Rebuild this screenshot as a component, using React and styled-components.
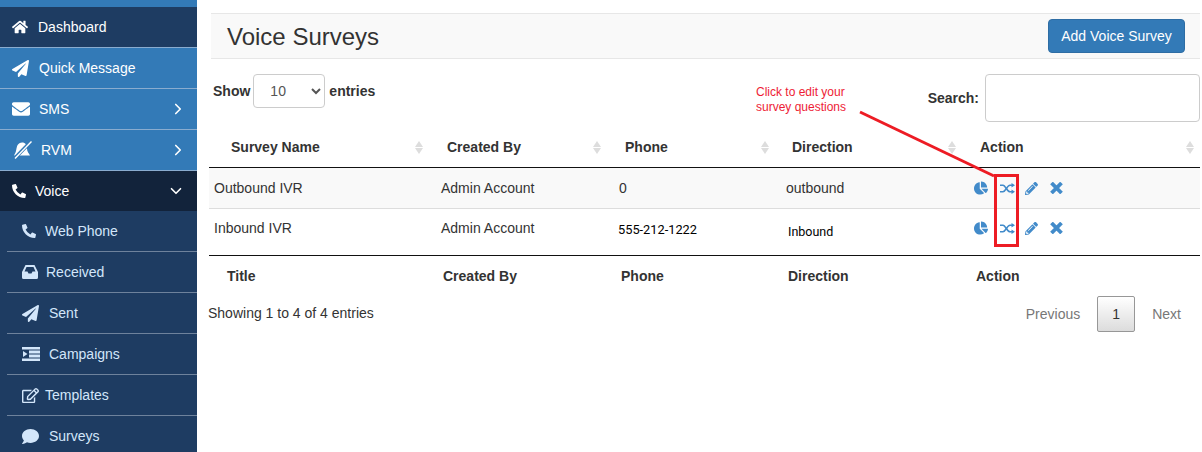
import React from 'react';
import styled, { createGlobalStyle } from 'styled-components';
import {
  FaHome, FaPaperPlane, FaEnvelope, FaPhoneAlt, FaRegEdit, FaComment, FaChartPie, FaPencilAlt,
} from 'react-icons/fa';
import { ChevronRight, ChevronDown } from 'lucide-react';

const GlobalStyle = createGlobalStyle`
  html, body {
    margin: 0;
    height: 452px;
    overflow: hidden;
    background: #fff;
    font-family: "Liberation Sans", Arial, sans-serif;
    font-size: 14px;
    color: #333;
  }
  * { box-sizing: border-box; }
`;

const BellOff = () => (
  <svg width="20" height="18" viewBox="0 0 20 18">
    <path d="M10 1.5c3.5 0 5 2.5 5 6 0 3.5 2 5 3 7H2l1.5-3C4.5 9.500 4.500 5 6 3.500 7 2.300 8.500 1.500 10 1.500Z" fill="currentColor" />
    <path d="M19 0.500 2.500 17.500" stroke="#337ab7" strokeWidth="3.600" />
    <path d="M19.500 0.500 3 17.500" stroke="currentColor" strokeWidth="1.400" />
  </svg>
);

const InboxIcon = () => (
  <svg width="16" height="14" viewBox="0 0 16 14">
    <path
      fillRule="evenodd"
      fill="currentColor"
      d="M3.500 0H12.500L16 7V12.500Q16 14 14.500 14H1.500Q0 14 0 12.500V7ZM4.500 2 2.500 6.500H5.500L6.500 8.500H9.500L10.500 6.500H13.500L11.500 2Z"
    />
  </svg>
);

const CampaignIcon = () => (
  <svg width="18" height="14" viewBox="0 0 18 14" fill="currentColor">
    <rect width="18" height="2.500" />
    <rect y="11.500" width="18" height="2.500" />
    <rect x="7" y="3.500" width="11" height="3" />
    <rect x="7" y="7.500" width="11" height="3" />
    <path d="M1 4 5.500 7 1 10Z" />
  </svg>
);

const ShuffleIcon = () => (
  <svg width="15" height="11" viewBox="0 0 15 11" fill="none" stroke="currentColor" strokeWidth="1.600">
    <path d="M0 2.200H3C5.500 2.200 7 8.800 10 8.800H12" />
    <path d="M0 8.800H3C5.500 8.800 7 2.200 10 2.200H12" />
    <path d="M11.500 0 15 2.200 11.500 4.400ZM11.500 6.600 15 8.800 11.500 11Z" fill="currentColor" stroke="none" />
  </svg>
);

const CrossIcon = () => (
  <svg width="13" height="12" viewBox="0 0 13 12" stroke="currentColor" strokeWidth="3.800">
    <path d="M1.500 1 11.500 11M11.500 1 1.500 11" />
  </svg>
);

// iconBox is the distance from the icon's left edge to the label
const mainNav = [
  { label: 'Dashboard', icon: <FaHome size={16} />, iconBox: 26, tone: 'dark' },
  { label: 'Quick Message', icon: <FaPaperPlane size={17} />, iconBox: 27, tone: 'blue' },
  { label: 'SMS', icon: <FaEnvelope size={18} />, iconBox: 27, tone: 'blue', caret: 'right' },
  { label: 'RVM', icon: <BellOff />, iconBox: 29, tone: 'blue', caret: 'right' },
  { label: 'Voice', icon: <FaPhoneAlt size={14} />, iconBox: 23, tone: 'active', caret: 'down' },
];

const subNav = [
  { label: 'Web Phone', icon: <FaPhoneAlt size={14} />, iconBox: 23 },
  { label: 'Received', icon: <InboxIcon />, iconBox: 24 },
  { label: 'Sent', icon: <FaPaperPlane size={17} />, iconBox: 27 },
  { label: 'Campaigns', icon: <CampaignIcon />, iconBox: 27 },
  { label: 'Templates', icon: <FaRegEdit size={17} />, iconBox: 23 },
  { label: 'Surveys', icon: <FaComment size={17} />, iconBox: 27 },
];

const columns = [
  { title: 'Survey Name', foot: 'Title', width: 227, first: true, sortGap: 13 },
  { title: 'Created By', foot: 'Created By', width: 178, sortGap: 13 },
  { title: 'Phone', foot: 'Phone', width: 167, sortGap: 12 },
  { title: 'Direction', foot: 'Direction', width: 188, sortGap: 13 },
  { title: 'Action', foot: 'Action', width: 231, sortGap: 6 },
];

const rows = [
  { name: 'Outbound IVR', by: 'Admin Account', phone: '0', direction: 'outbound' },
  { name: 'Inbound IVR', by: 'Admin Account', phone: '555-212-1222', direction: 'Inbound', pasted: true },
];

const toneColors = { dark: '#1e3c62', blue: '#337ab7', active: '#12233b' };

export default function App() {
  return (
    <>
      <GlobalStyle />
      <Page>
        <Sidebar>
          <TopStrip />
          {mainNav.map(({ label, icon, iconBox, tone, caret }) => (
            <NavRow key={label} $tone={tone}>
              <NavIcon $box={iconBox}>{icon}</NavIcon>
              {label}
              {caret === 'right' && <CaretRight><ChevronRight size={18} strokeWidth={2.2} /></CaretRight>}
              {caret === 'down' && <CaretDown><ChevronDown size={18} strokeWidth={2.2} /></CaretDown>}
            </NavRow>
          ))}
          {subNav.map(({ label, icon, iconBox }) => (
            <SubRow key={label}>
              <NavIcon $box={iconBox}>{icon}</NavIcon>
              {label}
            </SubRow>
          ))}
        </Sidebar>

        <Main>
          <PageHeader>
            <Title>Voice Surveys</Title>
            <AddButton>Add Voice Survey</AddButton>
          </PageHeader>

          <Toolbar>
            <Length>
              Show
              <Select defaultValue="10">
                <option>10</option>
                <option>25</option>
              </Select>
              entries
            </Length>
            <SearchLabel>
              Search:
              <SearchInput />
            </SearchLabel>
          </Toolbar>

          <Table>
            <colgroup>
              {columns.map((c) => <col key={c.title} style={{ width: c.width }} />)}
            </colgroup>
            <thead>
              <tr>
                {columns.map((c) => (
                  <HeadCell key={c.title} $first={c.first}>
                    <HeadInner $sortGap={c.sortGap}>
                      {c.title}
                      <SortArrows><i /><b /></SortArrows>
                    </HeadInner>
                  </HeadCell>
                ))}
              </tr>
            </thead>
            <tbody>
              {rows.map((r, i) => (
                <BodyRow key={r.name} $odd={i === 0}>
                  <Cell>{r.name}</Cell>
                  <Cell>{r.by}</Cell>
                  <Cell>{r.pasted ? <PhoneText>{r.phone}</PhoneText> : r.phone}</Cell>
                  <Cell>{r.pasted ? <DirectionText>{r.direction}</DirectionText> : r.direction}</Cell>
                  <Cell>
                    <Actions>
                      <FaChartPie size={14} />
                      <ShuffleIcon />
                      <FaPencilAlt size={13} />
                      <CrossIcon />
                    </Actions>
                  </Cell>
                </BodyRow>
              ))}
            </tbody>
            <tfoot>
              <tr>
                {columns.map((c) => (
                  <FootCell key={c.foot} $first={c.first}>{c.foot}</FootCell>
                ))}
              </tr>
            </tfoot>
          </Table>

          <Footer>
            <FooterInfo>Showing 1 to 4 of 4 entries</FooterInfo>
            <Pager>
              <PageLink>Previous</PageLink>
              <PageCurrent>1</PageCurrent>
              <PageLink>Next</PageLink>
            </Pager>
          </Footer>
        </Main>

        <Hint>Click to edit your<br />survey questions</Hint>
        <Pointer viewBox="0 0 140 68" width="140" height="68">
          <line x1="3" y1="2" x2="137" y2="66" stroke="#ed1c24" strokeWidth="3" />
        </Pointer>
        <Highlight />
      </Page>
    </>
  );
}

const Page = styled.div`
  position: relative;
  display: flex;
  width: 1202px;
  height: 452px;
  overflow: hidden;
`;

const Sidebar = styled.nav`
  flex: 0 0 197px;
  height: 452px;
  overflow: hidden;
  background: #1e3c62;
`;

const TopStrip = styled.div`
  height: 7px;
  background: #337ab7;
`;

const NavRow = styled.div`
  display: flex;
  align-items: center;
  height: ${(p) => (p.$tone === 'active' ? '40px' : '41px')};
  padding: 0 12px;
  background: ${(p) => toneColors[p.$tone]};
  border-bottom: ${(p) => (p.$tone === 'active' ? 'none' : '1px solid #8aaccf')};
  color: #fff;
`;

const SubRow = styled.div`
  display: flex;
  align-items: center;
  height: 41px;
  margin-left: 7px;
  padding-left: 15px;
  border-bottom: 1px solid #6e829c;
  color: #d3e6fa;
`;

const NavIcon = styled.span`
  display: flex;
  align-items: center;
  flex: none;
  width: ${(p) => p.$box}px;
`;

const CaretRight = styled.span`
  display: flex;
  margin: 0 -2px 0 auto;
`;

const CaretDown = styled.span`
  display: flex;
  margin-left: auto;
`;

const Main = styled.main`
  flex: 0 0 991px;
  margin-left: 12px;
  padding-top: 13px;
`;

const PageHeader = styled.header`
  display: flex;
  align-items: center;
  justify-content: space-between;
  height: 46px;
  margin-left: 2px;
  padding: 0 15px 0 16px;
  background: #f9f9f9;
  border-top: 1px solid #e7e7e7;
  border-bottom: 1px solid #e7e7e7;
`;

const Title = styled.h1`
  margin: 2px 0 0;
  font-size: 24px;
  font-weight: 400;
  color: #333;
`;

const AddButton = styled.button`
  width: 137px;
  height: 34px;
  padding: 0;
  background: #337ab7;
  border: 1px solid #2e6da4;
  border-radius: 4px;
  color: #fff;
  font: 14px "Liberation Sans", Arial, sans-serif;
`;

const Toolbar = styled.div`
  display: flex;
  justify-content: space-between;
  align-items: flex-start;
  height: 73px;
  padding: 15px 0 0 4px;
`;

const Length = styled.label`
  display: flex;
  align-items: center;
  gap: 3px;
  font-weight: 700;
`;

const Select = styled.select`
  width: 72px;
  height: 34px;
  margin-right: 1px;
  padding: 0 6px 0 12px;
  background: #fff;
  border: 1px solid #ccc;
  border-radius: 4px;
  color: #555;
  font: 14px "Liberation Sans", Arial, sans-serif;
`;

const SearchLabel = styled.label`
  display: flex;
  align-items: center;
  gap: 6px;
  font-weight: 700;
`;

const SearchInput = styled.input`
  width: 215px;
  height: 48px;
  background: #fff;
  border: 1px solid #ccc;
  border-radius: 4px;
`;

const Table = styled.table`
  width: 991px;
  table-layout: fixed;
  border-collapse: collapse;
`;

const HeadCell = styled.th`
  height: 35px;
  padding: 0 0 4px ${(p) => (p.$first ? 22 : 11)}px;
  border-bottom: 1px solid #111;
  text-align: left;
  font-weight: 700;
`;

const HeadInner = styled.div`
  display: flex;
  align-items: center;
  justify-content: space-between;
  padding-right: ${(p) => p.$sortGap}px;
`;

const SortArrows = styled.span`
  display: flex;
  flex-direction: column;
  gap: 1px;

  i, b {
    display: block;
    width: 0;
    height: 0;
    border-left: 4px solid transparent;
    border-right: 4px solid transparent;
  }
  i { border-bottom: 6px solid #ddd; }
  b { border-top: 6px solid #ddd; }
`;

const BodyRow = styled.tr`
  height: ${(p) => (p.$odd ? '41px' : '47px')};
  background: ${(p) => (p.$odd ? '#f9f9f9' : '#fff')};
  border-bottom: 1px solid ${(p) => (p.$odd ? '#ddd' : '#111')};

  td { padding-bottom: ${(p) => (p.$odd ? '0' : '8px')}; }
`;

const Cell = styled.td`
  padding-left: 5px;
  color: #333;
`;

const PhoneText = styled.span`
  display: inline-block;
  margin: 2px 0 0 -1px;
  color: #000;
  font-family: Roboto, sans-serif;
  font-size: 12.8px;
`;

const DirectionText = styled.span`
  display: inline-block;
  margin: 6px 0 0 2px;
  color: #000;
  font-family: Roboto, sans-serif;
  font-size: 12.5px;
`;

const Actions = styled.div`
  display: flex;
  align-items: center;
  gap: 10px;
  color: #428bca;

  svg:nth-child(2) { margin-left: 2px; }
  svg:nth-child(4) { margin-left: 2px; }
`;

const FootCell = styled.th`
  height: 41px;
  padding: 0 0 0 ${(p) => (p.$first ? 18 : 7)}px;
  text-align: left;
  font-weight: 700;
`;

const Footer = styled.div`
  display: flex;
  justify-content: space-between;
  align-items: center;
  height: 36px;
  margin-left: -1px;
  padding-right: 2px;
`;

const FooterInfo = styled.span`
  margin-top: -2px;
`;

const Pager = styled.div`
  display: flex;
  align-items: center;
`;

const PageLink = styled.span`
  padding: 0 17px;
  color: #777;
`;

const PageCurrent = styled.span`
  display: flex;
  align-items: center;
  justify-content: center;
  width: 38px;
  height: 36px;
  background: linear-gradient(#fff, #dcdcdc);
  border: 1px solid #979797;
  border-radius: 2px;
  color: #333;
`;

const Hint = styled.div`
  position: absolute;
  left: 756px;
  top: 85px;
  color: #ee1c35;
  font-size: 12px;
  line-height: 15px;
`;

const Pointer = styled.svg`
  position: absolute;
  left: 857px;
  top: 110px;
`;

const Highlight = styled.div`
  position: absolute;
  left: 994px;
  top: 174px;
  width: 25px;
  height: 73px;
  border: 3px solid #ed1c24;
`;
